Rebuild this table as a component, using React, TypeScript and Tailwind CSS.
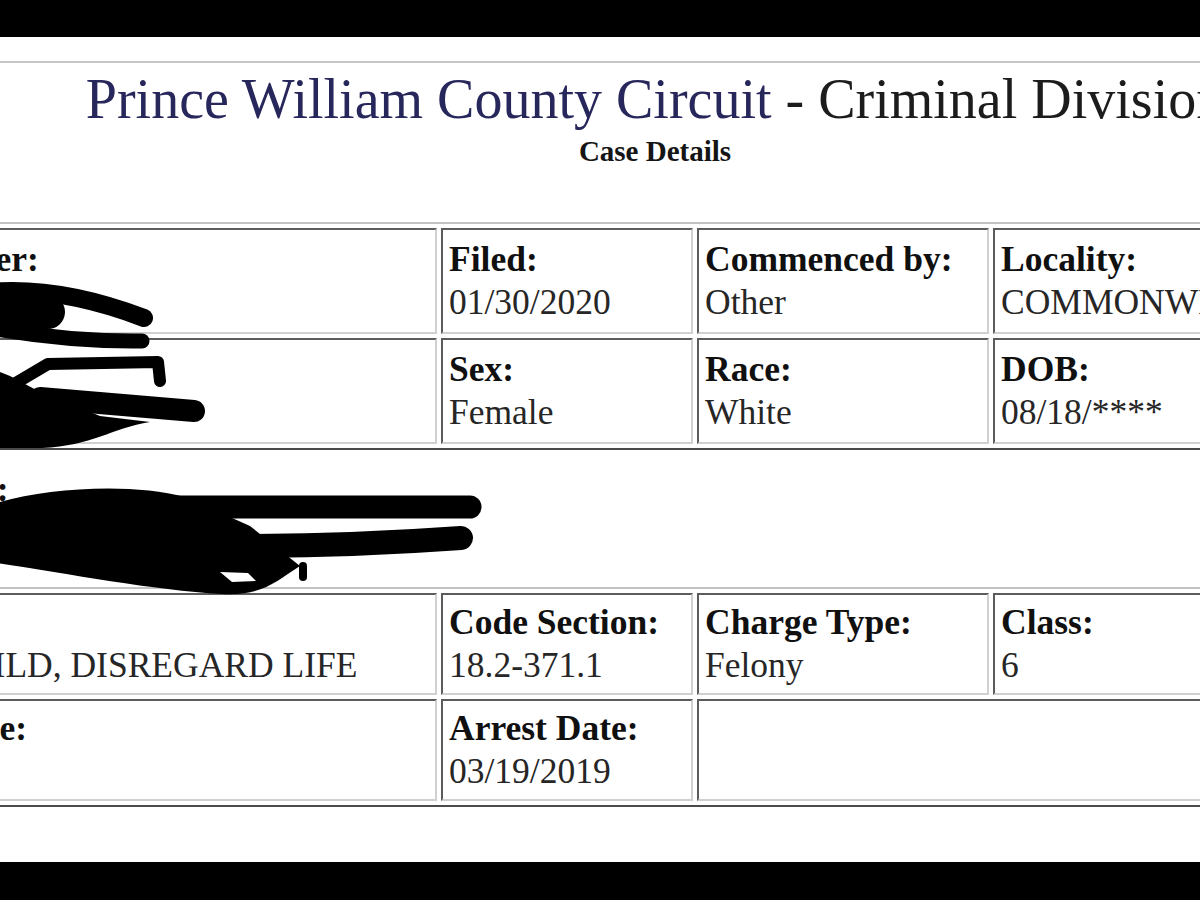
const cellBorder =
  "border-2 border-t-[#5c5c5c] border-l-[#5c5c5c] border-b-[#d0d0d0] border-r-[#d0d0d0] px-[6px]"
const tableBorder =
  "grid w-max gap-[4px] p-[4px] border-2 border-t-[#c2c2c2] border-l-[#c2c2c2] border-b-[#4a4a4a] border-r-[#4a4a4a]"

function Cell({ label, value, pad }: { label?: string; value?: string; pad: string }) {
  return (
    <div className={`${cellBorder} ${pad}`}>
      <div className="font-bold text-[#101010]">{label || "\u00a0"}</div>
      <div className="text-[#262626]">{value || "\u00a0"}</div>
    </div>
  )
}

// hand-drawn redaction marks over the names
function Redactions() {
  return (
    <svg className="absolute left-0 top-0" width="1200" height="900" viewBox="0 0 1200 900" fill="none">
      <g stroke="#000" strokeLinecap="round" strokeLinejoin="round">
        {/* case number */}
        <path d="M-10 292 Q60 286 144 318" strokeWidth="18" />
        <path d="M-10 328 Q70 342 142 341" strokeWidth="15" />
        <path d="M-10 310 L48 312" strokeWidth="34" />
        {/* defendant */}
        <path d="M4 390 L48 364 L158 362 L160 381" strokeWidth="12" />
        <path d="M40 398 L194 411" strokeWidth="22" />
        {/* address */}
        <path d="M170 507 L470 507" strokeWidth="23" />
        <path d="M240 546 Q350 546 461 538" strokeWidth="24" />
        <path d="M303 566 L303 577" strokeWidth="8" />
      </g>
      <path fill="#000" d="M-10 368 L10 376 L40 392 L100 416 L150 422 C112 428 92 446 42 448 L-10 448 Z" />
      <path
        fill="#000"
        d="M-10 505 C40 488 130 482 185 497 L250 526 L300 566 C275 582 262 596 222 594 C150 590 60 572 -10 562 Z"
      />
      <path fill="#fff" d="M220 572 L248 573 L256 581 L232 582 Z" />
    </svg>
  )
}

export default function App() {
  return (
    <div className="relative h-[900px] w-[1200px] overflow-hidden bg-white font-['Liberation_Serif',serif]">
      <div className="h-[37px] bg-black" />
      <div className="h-[825px] overflow-hidden">
        <div className="w-[1310px] pt-[24px]">
          <div className="border-t-2 border-[#c6c6c6]" />
          <h1 className="mt-[6px] whitespace-nowrap text-center text-[56px] leading-[60px] text-[#1c1c1c]">
            <span className="text-[#27275c]">Prince William County Circuit</span> - Criminal Division
          </h1>
          <p className="mt-[6px] text-center text-[29px] font-bold leading-[32px] text-[#151515]">Case Details</p>

          <div className="mt-[55px] -ml-[195px] text-[35.5px] leading-[43px]">
            <div className={`${tableBorder} grid-cols-[626px_252px_292px_290px]`}>
              <Cell pad="py-[8px]" label="Case Number:" />
              <Cell pad="py-[8px]" label="Filed:" value="01/30/2020" />
              <Cell pad="py-[8px]" label="Commenced by:" value="Other" />
              <Cell pad="py-[8px]" label="Locality:" value="COMMONWEALTH" />
              <Cell pad="py-[8px]" label="Defendant:" />
              <Cell pad="py-[8px]" label="Sex:" value="Female" />
              <Cell pad="py-[8px]" label="Race:" value="White" />
              <Cell pad="py-[8px]" label="DOB:" value="08/18/****" />
            </div>

            <div className="h-[137px] pl-[68px] pt-[18px]">
              <div className="font-bold text-[#101010]">Address:</div>
              <div>&nbsp;</div>
            </div>

            <div className={`${tableBorder} grid-cols-[626px_252px_292px_290px]`}>
              <Cell pad="py-[6px]" label="Charge:" value="ABUSE CHILD, DISREGARD LIFE" />
              <Cell pad="py-[6px]" label="Code Section:" value="18.2-371.1" />
              <Cell pad="py-[6px]" label="Charge Type:" value="Felony" />
              <Cell pad="py-[6px]" label="Class:" value="6" />
              <Cell pad="py-[6px]" label="Offense Date:" />
              <Cell pad="py-[6px]" label="Arrest Date:" value="03/19/2019" />
              <div className={`${cellBorder} col-span-2`} />
            </div>
          </div>
        </div>
      </div>
      <div className="h-[38px] bg-black" />
      <Redactions />
    </div>
  )
}
